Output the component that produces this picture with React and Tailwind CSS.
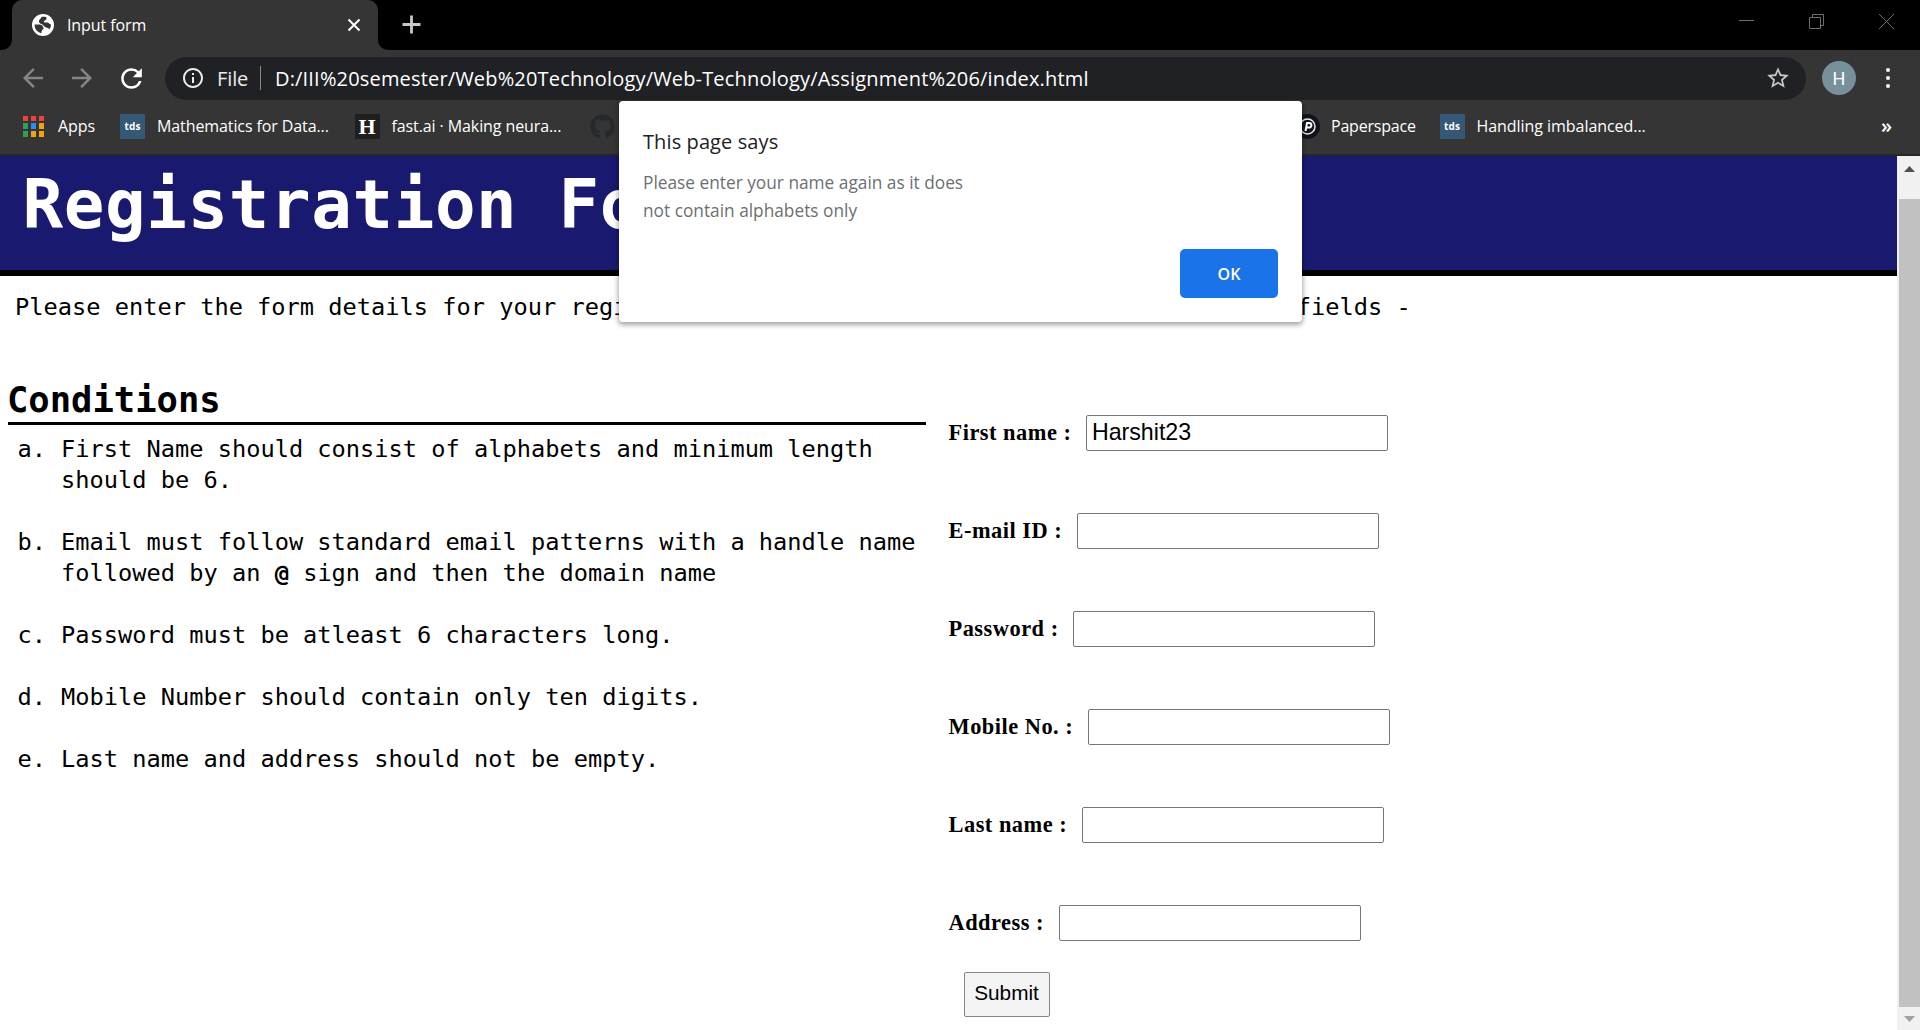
import { MdArrowBack, MdArrowForward, MdInfoOutline, MdRefresh, MdStarBorder } from 'react-icons/md';
import { FaGithub } from 'react-icons/fa';

const APP_COLORS = [
  'bg-[#e8453c]', 'bg-[#e8453c]', 'bg-[#e8453c]',
  'bg-[#2f9e58]', 'bg-[#2a8cf0]', 'bg-[#f0a510]',
  'bg-[#2f9e58]', 'bg-[#f0a510]', 'bg-[#f0a510]',
];

const FIELDS = [
  { label: 'First name :', value: 'Harshit23' },
  { label: 'E-mail ID :', value: '' },
  { label: 'Password :', value: '' },
  { label: 'Mobile No. :', value: '' },
  { label: 'Last name :', value: '' },
  { label: 'Address :', value: '' },
];

const CONDITIONS = [
  { mark: 'a.', text: 'First Name should consist of alphabets and minimum length should be 6.' },
  {
    mark: 'b.',
    text: (
      <>
        Email must follow standard email patterns with a handle name followed by an <b>@</b> sign and then the domain name
      </>
    ),
  },
  { mark: 'c.', text: 'Password must be atleast 6 characters long.' },
  { mark: 'd.', text: 'Mobile Number should contain only ten digits.' },
  { mark: 'e.', text: 'Last name and address should not be empty.' },
];

function TabStrip() {
  return (
    <div className="flex h-[50px] bg-black">
      <div className="flex w-3 items-end bg-[#353535]">
        <div className="h-full w-3 rounded-br-[10px] bg-black" />
      </div>
      <div className="flex w-[366px] items-center rounded-t-[10px] bg-[#353535] pl-[20px] pr-[17px] text-white">
        <svg className="size-[22px] shrink-0" viewBox="0 0 22 22">
          <circle cx="11" cy="11" r="11" fill="#fff" />
          <path
            d="M2.6 10.6H7.2C9.4 10.6 11.2 12 11.4 14V15.2C10.2 15.4 9.6 16.6 9.4 19.2 5.4 18.6 2.4 15 2.6 10.6ZM9.4 3C10.6 2.6 13.2 2.6 14.4 3.2 14.8 4.6 14.4 6 12.8 6.4 11.6 6.8 11.6 8.2 12.8 8.4H15.4C16.6 8.6 17 9.8 18.8 10.2 19.2 12 18.6 13.6 17.6 15 16.6 14.6 15.6 14 14.4 13.6 12.4 13.2 12 11.2 10 10.2 8.2 9.6 6.6 8.8 7 7 7.2 5.2 9 4.8 9.4 3Z"
            fill="#353535"
          />
        </svg>
        <span className="ml-[13px] grow text-[16px] leading-6 tracking-[-0.1px]">Input form</span>
        <svg className="size-[14px]" viewBox="0 0 14 14" stroke="currentColor" strokeWidth="2">
          <path d="M1.5 1.5 12.5 12.5M12.5 1.5 1.5 12.5" />
        </svg>
      </div>
      <div className="w-3 bg-[#353535]">
        <div className="h-full rounded-bl-[10px] bg-black" />
      </div>
      <svg className="ml-3 mt-[15px] size-[19px]" viewBox="0 0 19 19" stroke="#c8c8c8" strokeWidth="2.8">
        <path d="M9.5 0.5V18.5M0.5 9.5H18.5" />
      </svg>
      <div className="ml-auto mr-[26px] mt-[14px] flex gap-[55px] text-[#6e6e6e]">
        <svg className="size-[15px]" viewBox="0 0 15 15" stroke="currentColor"><path d="M0 6.5H15" /></svg>
        <svg className="size-[15px]" viewBox="0 0 15 15" fill="none" stroke="currentColor">
          <path d="M0.5 3.5h11v11h-11zM3.5 3.5v-3h11v11h-3" />
        </svg>
        <svg className="size-[15px]" viewBox="0 0 15 15" stroke="currentColor"><path d="M0 0 15 15M15 0 0 15" /></svg>
      </div>
    </div>
  );
}

function Toolbar() {
  return (
    <div className="flex h-[57px] items-center pb-px text-white">
      <MdArrowBack className="ml-[18px] size-[30px] text-[#858585]" />
      <MdArrowForward className="ml-[19px] size-[30px] text-[#858585]" />
      <MdRefresh className="ml-[19px] size-[31px]" />
      <div className="ml-[18px] flex h-[43px] w-[1641px] items-center rounded-full bg-[#202124] pl-4 pr-[15px] text-[20px]">
        <MdInfoOutline className="size-6 text-[#ececec]" />
        <span className="ml-3 w-[43px] pt-px tracking-[-0.1px] text-[#ececec]">File</span>
        <span className="h-6 w-px bg-[#85878a]" />
        <span className="ml-[14px] grow pt-px tracking-[0.17px]">
          D:/III%20semester/Web%20Technology/Web-Technology/Assignment%206/index.html
        </span>
        <MdStarBorder className="size-[26px] text-[#c8c8c8]" />
      </div>
      <span className="ml-4 flex size-[34px] items-center justify-center rounded-full bg-[#78909c] font-['Roboto'] text-[18px]">H</span>
      <span className="ml-[30px] flex flex-col gap-1">
        <i className="size-[4px] rounded-full bg-white" />
        <i className="size-[4px] rounded-full bg-white" />
        <i className="size-[4px] rounded-full bg-white" />
      </span>
    </div>
  );
}

function TdsIcon() {
  return (
    <span className="flex size-[25px] items-center justify-center bg-[#355876] pb-px text-[10px] font-bold leading-none tracking-[0.2px]">
      tds
    </span>
  );
}

function Bookmarks() {
  return (
    <div className="flex h-[49px] items-center border-b-2 border-[#272729] pb-[9px] text-[16px] tracking-[-0.1px] text-white">
      <span className="ml-[23px] grid size-[21px] grid-cols-3 gap-[2.5px]">
        {APP_COLORS.map((color, i) => <i key={i} className={color} />)}
      </span>
      <span className="ml-[14px] w-[62px]">Apps</span>
      <TdsIcon />
      <span className="ml-3 w-[197.5px]">Mathematics for Data...</span>
      <span className="flex size-[25px] items-center justify-center bg-[#1f1f1f] font-['Liberation_Serif'] text-[22px] font-bold">H</span>
      <span className="ml-3 w-[198px]">fast.ai · Making neura...</span>
      <FaGithub className="size-[25px] text-[#24292e]" />
      <svg className="ml-[680px] size-[25px]" viewBox="0 0 25 25">
        <circle cx="12.5" cy="12.5" r="12.5" fill="#10131a" />
        <circle cx="12.5" cy="12.5" r="7.5" fill="none" stroke="#e6e6e6" strokeWidth="1.5" />
        <path d="M10.5 17 12 9H14.2A2.3 2.3 0 0 1 14 13.6H11.5" fill="none" stroke="#fff" strokeWidth="2" />
      </svg>
      <span className="ml-[11.5px] w-[108.5px] tracking-[-0.2px]">Paperspace</span>
      <TdsIcon />
      <span className="ml-3 tracking-[-0.05px]">Handling imbalanced...</span>
      <span className="ml-auto mr-[28px] text-[20px] font-semibold leading-none">»</span>
    </div>
  );
}

function Conditions() {
  return (
    <section className="ml-2 w-[918px]">
      <h2 className="-ml-px h-[48px] pl-0 text-[35.5px] font-bold leading-[46px]">
        Conditions
      </h2>
      <div className="-mt-[3px] h-[3px] bg-black" />
      <ol className="mt-[9px] flex flex-col gap-[31px]">
        {CONDITIONS.map(({ mark, text }) => (
          <li key={mark} className="flex leading-[31px]">
            <span className="ml-[9.5px] w-[43.5px] shrink-0">{mark}</span>
            <span className="-mr-4">{text}</span>
          </li>
        ))}
      </ol>
    </section>
  );
}

function Form() {
  return (
    <form className="ml-[22.5px] mt-[38px] font-['Liberation_Serif',serif]">
      <div className="flex flex-col gap-[62px]">
        {FIELDS.map(({ label, value }) => (
          <label key={label} className="flex h-9 items-center text-[22.4px] font-bold leading-9 tracking-[0.5px]">
            {label}
            <input
              type="text"
              defaultValue={value}
              className="ml-[14.5px] h-9 w-[302px] rounded-[2px] border border-[#767676] bg-white px-[5px] pb-[3px] font-['Liberation_Sans',sans-serif] text-[23.2px] font-normal tracking-normal"
            />
          </label>
        ))}
      </div>
      <button
        type="button"
        className="ml-[15px] mt-[31px] h-[45px] w-[86px] rounded-[2px] border border-[#858585] bg-[#f4f4f4] pb-[3px] font-['Liberation_Sans',sans-serif] text-[20.8px]"
      >
        Submit
      </button>
    </form>
  );
}

function Scrollbar() {
  return (
    <div className="flex w-[23px] flex-col bg-[#f1f1f1]">
      <svg className="ml-[7px] mt-[10px] h-[6px] w-[11px] shrink-0" viewBox="0 0 11 6"><path d="M5.5 0 11 6H0z" fill="#505050" /></svg>
      <div className="ml-[2px] mt-[27px] h-[808px] shrink-0 bg-[#c1c1c1]" />
      <svg className="ml-[7px] mt-[9px] h-[6px] w-[11px] shrink-0" viewBox="0 0 11 6"><path d="M0 0H11L5.5 6z" fill="#a0a0a0" /></svg>
    </div>
  );
}

function AlertDialog() {
  return (
    <div
      role="alertdialog"
      className="absolute left-[619px] top-[101px] flex h-[221px] w-[683px] flex-col rounded bg-white px-6 pt-[25px] shadow-[0_2px_5px_1px_rgba(0,0,0,0.35)]"
    >
      <h3 className="text-[20px] leading-8 tracking-[0.1px] text-[#202124]">This page says</h3>
      <p className="mt-[11px] w-[340px] text-[17.3px] leading-[27.5px] text-[#6c6f73]">
        Please enter your name again as it does not contain alphabets only
      </p>
      <button type="button" className="ml-auto mt-[25px] h-[49px] w-[98px] rounded-[5px] bg-[#1a73e8] text-[16px] font-semibold text-white">
        OK
      </button>
    </div>
  );
}

export default function App() {
  return (
    <div className="relative flex h-[1030px] w-[1920px] flex-col overflow-hidden bg-white font-['Open_Sans',sans-serif] text-black">
      <header className="shrink-0 bg-[#353535]">
        <TabStrip />
        <Toolbar />
        <Bookmarks />
      </header>
      <div className="flex min-h-0 grow">
        <main className="w-[1897px] overflow-hidden font-['DejaVu_Sans_Mono',monospace] text-[23.67px]">
          <h1 className="h-[120px] whitespace-nowrap border-b-[6px] border-black bg-[#191970] pl-[22.5px] text-[67.5px] font-bold leading-[98px] tracking-[0.6px] text-white">
            Registration Form
          </h1>
          <p className="mt-[16px] whitespace-nowrap pl-[15px] leading-[31px]">
            Please enter the form details for your registration below and fill in all of the required fields -
          </p>
          <div className="mt-[54px] flex">
            <Conditions />
            <Form />
          </div>
        </main>
        <Scrollbar />
      </div>
      <AlertDialog />
    </div>
  );
}
